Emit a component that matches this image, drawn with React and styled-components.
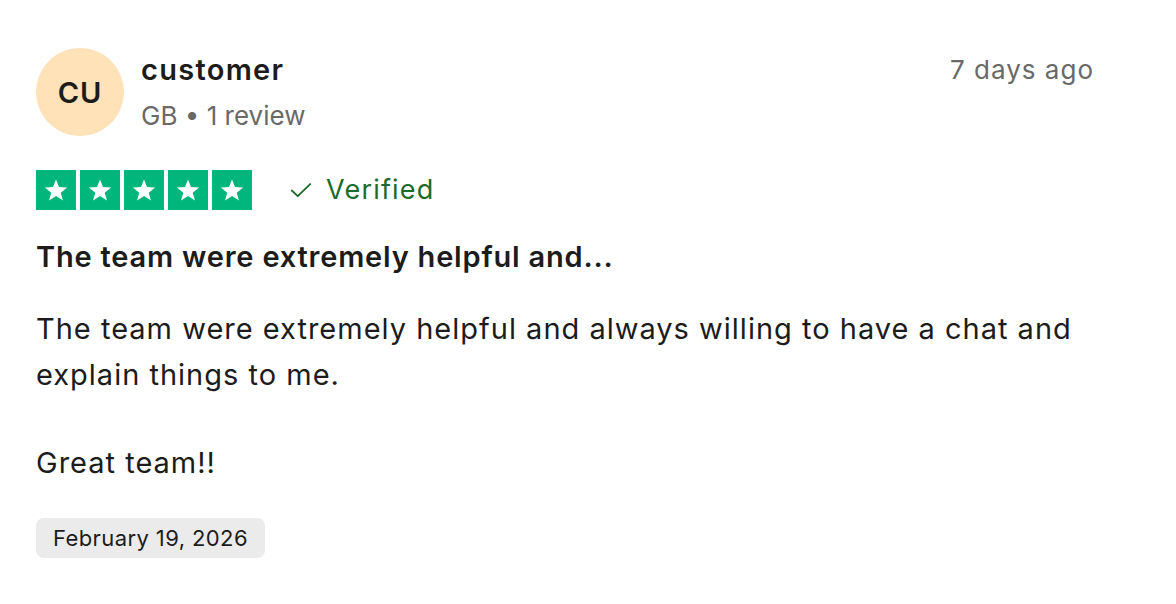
import styled, { createGlobalStyle } from "styled-components";

const GlobalStyle = createGlobalStyle`
  html, body {
    margin: 0;
    padding: 0;
    background: #ffffff;
  }
  body {
    font-family: Inter, "Noto Sans", "Liberation Sans", sans-serif;
    color: #1c1c1c;
  }
`;

const Star = () => (
  <svg width="26" height="26" viewBox="0 0 24 24">
    <path
      d="M12 2.2l2.75 7.1 7.55.4-5.9 4.75 2 7.35L12 17.6l-6.4 4.2 2-7.35-5.9-4.75 7.55-.4z"
      fill="#ffffff"
    />
  </svg>
);

const Check = () => (
  <svg width="26" height="26" viewBox="0 0 24 24" fill="none">
    <path d="M3.5 12.5l5.5 5.2L20.5 6.5" stroke="#1c6b2c" strokeWidth="1.7" strokeLinecap="round" strokeLinejoin="round" />
  </svg>
);

export default function App() {
  return (
    <>
      <GlobalStyle />
      <StyledCard>
        <StyledHeader>
          <StyledAvatar>CU</StyledAvatar>
          <StyledUserInfo>
            <StyledName>customer</StyledName>
            <StyledMeta>GB • 1 review</StyledMeta>
          </StyledUserInfo>
          <StyledTime>7 days ago</StyledTime>
        </StyledHeader>

        <StyledRatingRow>
          <StyledStars>
            {[0, 1, 2, 3, 4].map((i) => (
              <StyledStarBox key={i}>
                <Star />
              </StyledStarBox>
            ))}
          </StyledStars>
          <StyledVerified>
            <Check />
            Verified
          </StyledVerified>
        </StyledRatingRow>

        <StyledTitle>The team were extremely helpful and...</StyledTitle>

        <StyledBody>
          <p>The team were extremely helpful and always willing to have a chat and explain things to me.</p>
          <p>Great team!!</p>
        </StyledBody>

        <StyledDateChip>February 19, 2026</StyledDateChip>
      </StyledCard>
    </>
  );
}

const StyledCard = styled.article`
  width: 1176px;
  box-sizing: border-box;
  padding: 48px 82px 0 36px;
  display: flex;
  flex-direction: column;
  align-items: flex-start;
`;

const StyledHeader = styled.header`
  display: flex;
  align-items: flex-start;
  gap: 17px;
  width: 100%;
`;

const StyledAvatar = styled.div`
  width: 88px;
  height: 88px;
  flex-shrink: 0;
  border-radius: 50%;
  background: #ffe2b8;
  display: flex;
  align-items: center;
  justify-content: center;
  font-size: 29px;
  font-weight: 600;
  letter-spacing: 1px;
  color: #1c1c1c;
`;

const StyledUserInfo = styled.div`
  display: flex;
  flex-direction: column;
  flex: 1;
  padding-top: 1px;
`;

const StyledName = styled.span`
  font-size: 29px;
  line-height: 42px;
  font-weight: 600;
  letter-spacing: 1.3px;
  color: #1c1c1c;
`;

const StyledMeta = styled.span`
  font-size: 26px;
  line-height: 50px;
  color: #696969;
`;

const StyledTime = styled.span`
  font-size: 26px;
  line-height: 42px;
  letter-spacing: 1px;
  color: #696969;
  padding-top: 1px;
`;

const StyledRatingRow = styled.div`
  display: flex;
  align-items: center;
  gap: 36px;
  margin-top: 29px;
`;

const StyledStars = styled.div`
  display: flex;
  gap: 4px;
`;

const StyledStarBox = styled.span`
  width: 40px;
  height: 40px;
  background: #00b67a;
  display: flex;
  align-items: center;
  justify-content: center;
`;

const StyledVerified = styled.span`
  display: flex;
  align-items: center;
  gap: 12px;
  font-size: 27px;
  letter-spacing: 1.2px;
  color: #1c6b2c;
  margin-top: -1px;
`;

const StyledTitle = styled.h2`
  margin: 24px 0 0;
  font-size: 29px;
  line-height: 46px;
  font-weight: 600;
  letter-spacing: 0.8px;
  color: #1c1c1c;
`;

const StyledBody = styled.div`
  margin-top: 26px;
  display: flex;
  flex-direction: column;
  gap: 42px;

  p {
    margin: 0;
    font-size: 29px;
    line-height: 46px;
    letter-spacing: 1px;
    color: #1c1c1c;
  }
`;

const StyledDateChip = styled.span`
  margin-top: 32px;
  padding: 0 17px;
  height: 40px;
  display: inline-flex;
  align-items: center;
  background: #ebebeb;
  border-radius: 8px;
  font-size: 22px;
  letter-spacing: 0.4px;
  color: #1c1c1c;
`;
